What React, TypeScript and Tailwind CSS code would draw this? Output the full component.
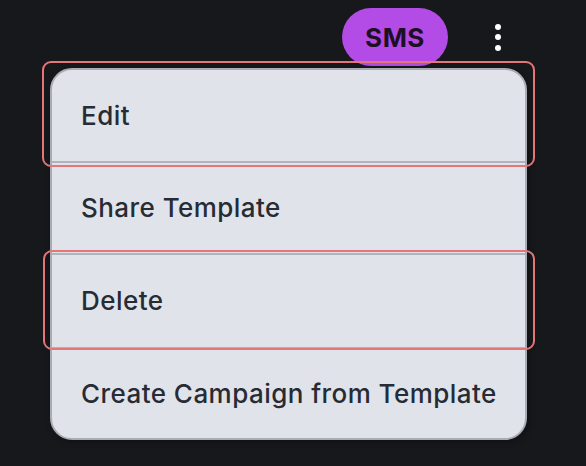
import React from "react";

const items = [
  { label: "Edit", h: "h-[93px] border-b-2" },
  { label: "Share Template", h: "h-[92px] border-b-2" },
  { label: "Delete", h: "h-[94px] border-b-2" },
  { label: "Create Campaign from Template", h: "h-[89px]" },
];

function Dots() {
  return (
    <div className="flex flex-col items-center gap-[4.5px]">
      <span className="block w-[6px] h-[6px] rounded-full bg-white" />
      <span className="block w-[6px] h-[6px] rounded-full bg-white" />
      <span className="block w-[6px] h-[6px] rounded-full bg-white" />
    </div>
  );
}

export default function App() {
  return (
    <div
      className="w-[586px] h-[466px] bg-[#16181c] overflow-hidden"
      style={{ fontFamily: "Inter, 'Noto Sans', sans-serif" }}
    >
      <div className="flex items-center justify-end pt-[8px] pr-[85px] gap-[47px]">
        <div className="w-[106px] h-[58px] rounded-full bg-[#b34ce6] flex items-center justify-center">
          <span className="text-[26px] font-bold text-[#1d1024] tracking-[0.5px]">SMS</span>
        </div>
        <Dots />
      </div>

      <div className="relative ml-[50px] mt-[2px] w-[477px]">
        <div className="rounded-[22px] border-2 border-[#a9acb4] bg-[#e0e3ea] overflow-hidden shadow-[2px_2px_6px_rgba(0,0,0,0.35)]">
          {items.map((it) => (
            <div
              key={it.label}
              className={`${it.h} px-[29px] flex items-center border-[#b0b3ba]`}
            >
              <span className="whitespace-nowrap text-[26px] leading-none font-medium text-[#272b34] tracking-[0.45px]">
                {it.label}
              </span>
            </div>
          ))}
        </div>

        {/* focus outlines */}
        <div className="absolute left-[-8px] right-[-8px] top-[-7px] h-[106px] rounded-[9px] border-[2.5px] border-[#e67577] pointer-events-none" />
        <div className="absolute left-[-7px] right-[-8px] top-[182px] h-[100px] rounded-[9px] border-[2.5px] border-[#e67577] pointer-events-none" />
      </div>
    </div>
  );
}
